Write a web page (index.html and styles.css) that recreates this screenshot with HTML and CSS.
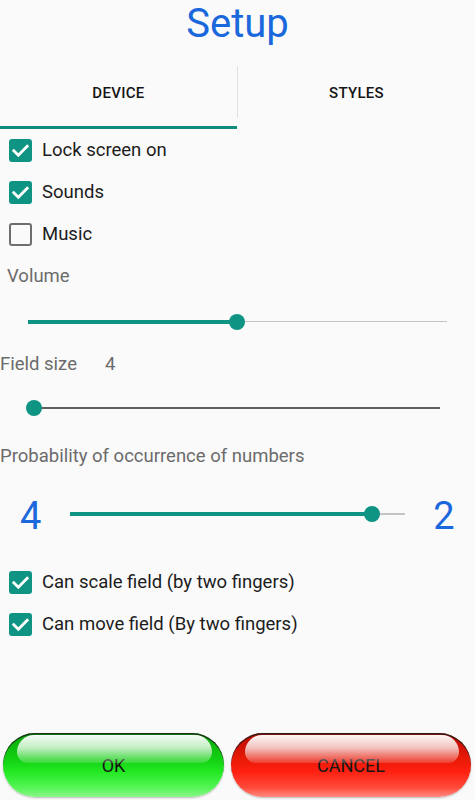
FILE: index.html
```html
<!DOCTYPE html>
<html>
<head>
<meta charset="utf-8">
<link rel="stylesheet" href="styles.css">
</head>
<body>
<div class="screen">
  <h1 class="title">Setup</h1>
  <div class="tabs">
    <div class="tab active">DEVICE</div>
    <div class="tab-divider"></div>
    <div class="tab">STYLES</div>
  </div>
  <div class="indicator-row"><div class="indicator"></div></div>

  <div class="check-row">
    <span class="box checked"><svg viewBox="0 0 23 23" width="23" height="23"><path d="M4.8 11.8 L9.3 16.2 L18.2 7.3" fill="none" stroke="#fff" stroke-width="2.8" stroke-linecap="square"/></svg></span>
    <span class="check-label">Lock screen on</span>
  </div>
  <div class="check-row">
    <span class="box checked"><svg viewBox="0 0 23 23" width="23" height="23"><path d="M4.8 11.8 L9.3 16.2 L18.2 7.3" fill="none" stroke="#fff" stroke-width="2.8" stroke-linecap="square"/></svg></span>
    <span class="check-label">Sounds</span>
  </div>
  <div class="check-row">
    <span class="box"></span>
    <span class="check-label">Music</span>
  </div>

  <div class="label label-volume">Volume</div>
  <div class="slider slider-volume">
    <div class="fill" style="width:209px"></div>
    <div class="thumb"></div>
    <div class="rest"></div>
  </div>

  <div class="label label-field"><span>Field size</span><span class="field-value">4</span></div>
  <div class="slider slider-field">
    <div class="fill" style="width:0px"></div>
    <div class="thumb"></div>
    <div class="rest dark"></div>
  </div>

  <div class="label label-prob">Probability of occurrence of numbers</div>
  <div class="prob-row">
    <span class="big-num num-left">4</span>
    <div class="slider slider-prob">
      <div class="fill" style="width:302px"></div>
      <div class="thumb"></div>
      <div class="rest"></div>
    </div>
    <span class="big-num num-right">2</span>
  </div>

  <div class="check-row first-bottom">
    <span class="box checked"><svg viewBox="0 0 23 23" width="23" height="23"><path d="M4.8 11.8 L9.3 16.2 L18.2 7.3" fill="none" stroke="#fff" stroke-width="2.8" stroke-linecap="square"/></svg></span>
    <span class="check-label">Can scale field (by two fingers)</span>
  </div>
  <div class="check-row">
    <span class="box checked"><svg viewBox="0 0 23 23" width="23" height="23"><path d="M4.8 11.8 L9.3 16.2 L18.2 7.3" fill="none" stroke="#fff" stroke-width="2.8" stroke-linecap="square"/></svg></span>
    <span class="check-label">Can move field (By two fingers)</span>
  </div>

  <div class="spacer"></div>

  <div class="buttons">
    <button class="gloss btn-ok">OK</button>
    <button class="gloss btn-cancel">CANCEL</button>
  </div>
</div>
</body>
</html>
```

FILE: styles.css
```css
html, body {
  margin: 0;
  padding: 0;
  background: #fafafa;
}
body {
  font-family: Roboto, "Noto Sans", "Liberation Sans", sans-serif;
  color: #1f1f1f;
}
.screen {
  width: 475px;
  height: 800px;
  display: flex;
  flex-direction: column;
  overflow: hidden;
}
.title {
  margin: 0;
  height: 66px;
  font-size: 40px;
  font-weight: 400;
  line-height: 48px;
  text-align: center;
  color: #1a68dc;
}
.tabs {
  height: 60px;
  display: flex;
}
.tab {
  flex: 1;
  display: flex;
  align-items: center;
  justify-content: center;
  padding-bottom: 6px;
  font-size: 15px;
  font-weight: 500;
  color: #151515;
  letter-spacing: 0.3px;
}
.tab-divider {
  width: 1px;
  height: 52px;
  background: #e2e2e2;
}
.indicator-row {
  height: 3px;
  display: flex;
}
.indicator {
  width: 237px;
  height: 3px;
  background: #0f8c7e;
}
.check-row {
  height: 42px;
  display: flex;
  align-items: center;
}
.first-bottom {
  margin-top: 10px;
}
.box {
  box-sizing: border-box;
  width: 23px;
  height: 23px;
  margin-left: 9px;
  margin-right: 10px;
  border: 2.5px solid #6e6e6e;
  border-radius: 3px;
  display: flex;
}
.box.checked {
  border: none;
  background: #0f9484;
}
.check-label {
  font-size: 18.5px;
  color: #1c1c1c;
}
.label {
  font-size: 18.5px;
  color: #6b6b6b;
  display: flex;
  align-items: center;
}
.label-volume {
  height: 42px;
  padding-left: 7px;
}
.label-field {
  height: 35px;
}
.field-value {
  margin-left: 28px;
}
.label-prob {
  height: 42px;
}
.slider {
  display: flex;
  align-items: center;
}
.fill {
  height: 4px;
  background: #0f9484;
  flex: none;
}
.thumb {
  width: 16px;
  height: 16px;
  border-radius: 50%;
  background: #0f9484;
  margin: 0 -8px;
  flex: none;
  position: relative;
  z-index: 1;
}
.rest {
  flex: 1;
  height: 1.5px;
  background: #c4c4c4;
}
.rest.dark {
  background: #5f5f5f;
}
.slider-volume {
  height: 49px;
  padding: 0 28px;
}
.slider-field {
  height: 54px;
  padding: 0 35px 0 34px;
}
.prob-row {
  height: 74px;
  display: flex;
  align-items: center;
}
.slider-prob {
  width: 335px;
  margin-left: 29px;
  height: 20px;
}
.big-num {
  font-size: 38px;
  line-height: 40px;
  color: #1a68dc;
  padding-top: 4px;
}
.num-left {
  margin-left: 20px;
}
.num-right {
  margin-left: 28px;
}
.spacer {
  flex: 1;
}
.buttons {
  display: flex;
  padding: 0 0 3px 3px;
  gap: 7px;
}
.gloss {
  position: relative;
  height: 64px;
  border: none;
  border-radius: 32px;
  font-family: Roboto, "Noto Sans", "Liberation Sans", sans-serif;
  font-size: 18px;
  color: #161616;
  padding: 0;
  box-shadow: inset 0 1.5px 0 rgba(30, 30, 30, 0.85), 0 1px 2px rgba(0, 0, 0, 0.25);
  overflow: hidden;
}
.gloss::before {
  content: "";
  position: absolute;
  left: 14px;
  right: 12px;
  top: 2px;
  height: 28px;
  border-radius: 22px 22px 14px 14px;
  background: linear-gradient(to bottom, rgba(255,255,255,0.97) 0%, rgba(255,255,255,0.75) 45%, rgba(255,255,255,0.15) 100%);
}
.btn-ok {
  width: 221px;
  background: linear-gradient(to bottom, #0aa80a 0%, #12d012 40%, #22e822 60%, #55f555 85%, #8af58a 100%);
}
.btn-cancel {
  width: 240px;
  background: linear-gradient(to bottom, #b80a00 0%, #e81a08 40%, #ff2010 60%, #ff4a3a 85%, #ff8a80 100%);
}
```
